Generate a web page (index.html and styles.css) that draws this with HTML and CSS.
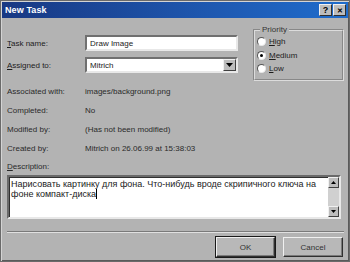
FILE: index.html
```html
<!DOCTYPE html>
<html>
<head>
  <meta charset="UTF-8">
  <link rel="stylesheet" href="styles.css">
</head>
<body>
  <div class="window">
    <div class="titlebar">
      <span class="title">New Task</span>
      <div class="tbtns">
        <span class="tbtn">?</span>
        <span class="tbtn close">&#x2715;</span>
      </div>
    </div>

    <div class="content">
      <div class="top">
        <div class="fields">
          <div class="frow">
            <span class="label"><u>T</u>ask name:</span>
            <div class="field">Draw Image</div>
          </div>
          <div class="frow">
            <span class="label"><u>A</u>ssigned to:</span>
            <div class="field combo">
              <span class="ctext">Mitrich</span>
              <span class="cbtn"><svg width="7" height="4" viewBox="0 0 7 4"><path d="M0 0h7L3.5 4z" fill="#000"/></svg></span>
            </div>
          </div>
        </div>

        <fieldset class="priority">
          <legend>Priority</legend>
          <div class="radio"><span class="dot"></span><span><u>H</u>igh</span></div>
          <div class="radio"><span class="dot on"></span><span><u>M</u>edium</span></div>
          <div class="radio"><span class="dot"></span><span><u>L</u>ow</span></div>
        </fieldset>
      </div>

      <div class="info">
        <div class="irow"><span class="label">Associated with:</span><span>images/background.png</span></div>
        <div class="irow"><span class="label">Completed:</span><span>No</span></div>
        <div class="irow"><span class="label">Modified by:</span><span>(Has not been modified)</span></div>
        <div class="irow"><span class="label">Created by:</span><span>Mitrich on 26.06.99 at 15:38:03</span></div>
        <div class="irow desc"><span class="label"><u>D</u>escription:</span></div>
      </div>

      <div class="memo">
        <div class="memo-text">Нарисовать картинку для фона. Что-нибудь вроде скрипичного ключа на<br>фоне компакт-диска<span class="caret"></span></div>
        <div class="scroll">
          <span class="sbtn"><svg width="5" height="3" viewBox="0 0 5 3"><path d="M2.5 0L5 3H0z" fill="#000"/></svg></span>
          <span class="track"></span>
          <span class="sbtn"><svg width="5" height="3" viewBox="0 0 5 3"><path d="M0 0h5L2.5 3z" fill="#000"/></svg></span>
        </div>
      </div>

      <div class="sep"></div>

      <div class="buttons">
        <span class="btn default">OK</span>
        <span class="btn">Cancel</span>
      </div>
    </div>
  </div>
</body>
</html>
```

FILE: styles.css
```css
html, body { margin: 0; padding: 0; }
body { width: 350px; height: 262px; overflow: hidden; background: #b3b3b3; font-family: "Liberation Sans", Arial, sans-serif; font-size: 8px; color: #1c1c1c; }

.window { width: 350px; height: 262px; box-sizing: border-box; background: #b3b3b3; border: 1px solid #6a6a6a; box-shadow: inset 1px 1px 0 #d4d4d4, inset -1px -1px 0 #5a5a5a; padding: 1px; }

.titlebar { height: 16px; display: flex; align-items: center; justify-content: space-between; background: linear-gradient(to right, #183883, #1e58b0 60%, #1e6ccc); padding: 0 2px 0 3px; }
.title { color: #fff; font-weight: bold; font-size: 9px; letter-spacing: 0.1px; }
.tbtns { display: flex; gap: 1px; }
.tbtn { width: 11px; height: 10px; background: #bdbdbd; border: 1px solid; border-color: #f0f0f0 #303030 #303030 #f0f0f0; display: flex; align-items: center; justify-content: center; font-weight: bold; font-size: 9px; color: #000; line-height: 1; }
.tbtn.close { font-size: 7px; }

.content { padding: 0 4px 0 5px; }

.top { display: flex; height: 64px; }
.fields { width: 231px; padding-top: 17px; }
.frow { display: flex; align-items: center; height: 16px; margin-bottom: 6px; }
.label { width: 78px; flex: none; }
.field { width: 153px; height: 16px; box-sizing: border-box; background: #fff; border: 2px solid; border-color: #707070 #e8e8e8 #e8e8e8 #707070; padding: 2px 3px 0; color: #222; }
.combo { display: flex; justify-content: space-between; padding: 0 0 0 3px; align-items: center; }
.cbtn { width: 13px; height: 12px; box-sizing: border-box; background: #bdbdbd; border: 1px solid; border-color: #f0f0f0 #404040 #404040 #f0f0f0; display: flex; align-items: center; justify-content: center; }

.priority { margin: 7px 0 0 15px; width: 92px; height: 56px; box-sizing: border-box; border: 2px groove #dcdcdc; padding: 0 0 0 2px; }
.priority legend { padding: 0 2px; margin-left: 3px; color: #333; }
.radio { display: flex; align-items: center; height: 13.5px; gap: 3px; }
.radio:first-of-type { margin-top: 1px; }
.dot { width: 9px; height: 9px; box-sizing: border-box; border-radius: 50%; background: #fff; border: 1px solid; border-color: #555 #e8e8e8 #e8e8e8 #555; position: relative; }
.dot.on::after { content: ""; position: absolute; left: 2px; top: 2px; width: 3px; height: 3px; border-radius: 50%; background: #000; }

.info { display: flex; flex-direction: column; }
.irow { display: flex; align-items: center; height: 19px; color: #2a2a2a; }
.irow.desc { height: 17px; }

.memo { display: flex; height: 44px; box-sizing: border-box; background: #fff; border: 2px solid; border-color: #6a6a6a #e8e8e8 #e8e8e8 #6a6a6a; box-shadow: inset 1px 1px 0 #303030; margin-right: 3px; }
.memo-text { flex: 1; padding: 2px 2px; font-size: 9px; line-height: 10px; color: #222; }
.caret { display: inline-block; width: 1px; height: 10px; background: #000; vertical-align: top; }
.scroll { width: 11px; display: flex; flex-direction: column; background: #d0d0d0; }
.sbtn { height: 11px; box-sizing: border-box; background: #bdbdbd; border: 1px solid; border-color: #f0f0f0 #404040 #404040 #f0f0f0; display: flex; align-items: center; justify-content: center; }
.track { flex: 1; }

.sep { margin-top: 12px; height: 0; border-top: 1px solid #7a7a7a; border-bottom: 1px solid #e0e0e0; }

.buttons { display: flex; justify-content: flex-end; gap: 8px; margin-top: 4px; padding-right: 1px; }
.btn { width: 60px; height: 20px; box-sizing: border-box; background: #b8b8b8; border: 1px solid; border-color: #f0f0f0 #303030 #303030 #f0f0f0; box-shadow: inset -1px -1px 0 #7a7a7a; display: flex; align-items: center; justify-content: center; color: #333; }
.btn.default { width: 59px; outline: 1px solid #1a1a1a; outline-offset: 0; }
```
